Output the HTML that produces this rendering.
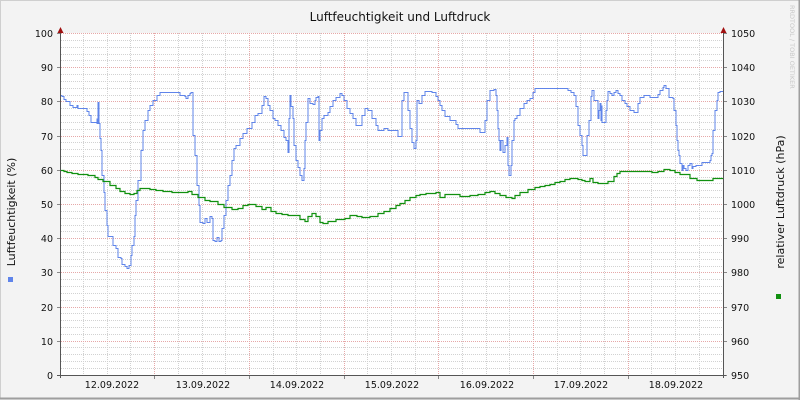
<!DOCTYPE html>
<html><head><meta charset="utf-8"><style>
html,body{margin:0;padding:0;background:#f3f3f3;}
svg{display:block;font-family:"DejaVu Sans","Liberation Sans",sans-serif;}
</style></head><body>
<svg width="800" height="400" viewBox="0 0 800 400" xmlns="http://www.w3.org/2000/svg">
<rect x="0" y="0" width="800" height="400" fill="#f3f3f3"/>
<path d="M0.5 0V399.5M0 0.5H800" stroke="#cfcfcf" fill="none"/>
<path d="M799.5 0V400M0 398.5H800" stroke="#9e9e9e" stroke-width="2" fill="none"/>
<rect x="61" y="33" width="662" height="342" fill="#ffffff"/>
<path stroke="#d2d2d2" stroke-dasharray="1,1" fill="none" d="M61 368.5H723M61 361.5H723M61 354.5H723M61 347.5H723M61 334.5H723M61 327.5H723M61 320.5H723M61 313.5H723M61 300.5H723M61 293.5H723M61 286.5H723M61 279.5H723M61 266.5H723M61 259.5H723M61 252.5H723M61 245.5H723M61 231.5H723M61 225.5H723M61 218.5H723M61 211.5H723M61 197.5H723M61 190.5H723M61 183.5H723M61 177.5H723M61 163.5H723M61 156.5H723M61 149.5H723M61 142.5H723M61 129.5H723M61 122.5H723M61 115.5H723M61 108.5H723M61 95.5H723M61 88.5H723M61 81.5H723M61 74.5H723M61 60.5H723M61 54.5H723M61 47.5H723M61 40.5H723"/>
<path stroke="#d2d2d2" stroke-dasharray="1,1" fill="none" d="M83.5 33V375M107.5 33V375M130.5 33V375M178.5 33V375M202.5 33V375M225.5 33V375M273.5 33V375M296.5 33V375M320.5 33V375M367.5 33V375M391.5 33V375M415.5 33V375M462.5 33V375M486.5 33V375M509.5 33V375M557.5 33V375M580.5 33V375M604.5 33V375M651.5 33V375M675.5 33V375M699.5 33V375"/>
<path stroke="#e6a8a8" stroke-dasharray="1,1" fill="none" d="M61 341.5H723M61 307.5H723M61 272.5H723M61 238.5H723M61 204.5H723M61 170.5H723M61 136.5H723M61 101.5H723M61 67.5H723M61 33.5H723M154.5 33V375M249.5 33V375M344.5 33V375M438.5 33V375M533.5 33V375M628.5 33V375"/>
<path stroke="#888" fill="none" d="M57 375.5H61M57 341.5H61M57 307.5H61M57 272.5H61M57 238.5H61M57 204.5H61M57 170.5H61M57 136.5H61M57 101.5H61M57 67.5H61M57 33.5H61M723 375.5H727M723 341.5H727M723 307.5H727M723 272.5H727M723 238.5H727M723 204.5H727M723 170.5H727M723 136.5H727M723 101.5H727M723 67.5H727M723 33.5H727M154.5 375V379M249.5 375V379M344.5 375V379M438.5 375V379M533.5 375V379M628.5 375V379"/>
<polyline class="step" fill="none" stroke="#5f84ea" stroke-width="1" points="61,95 62,96 64,99 66,101 70,105 73,107 76,107 77,105 78,108 85,108 87,111 89,115 91,122 93,122 96,122 97,118 97,123 98,102 99,123 100,138 101,150 102,175 104,192 105,210 107,225 108,236 111,236 113,245 116,248 118,257 121,258 122,264 125,266 127,268 129,265 131,255 132,245 134,236 135,215 136,200 138,180 141,150 143,130 145,120 148,110 150,105 153,100 157,95 160,92 178,92 180,95 185,96 186,98 188,95 190,93 191,92 193,135 195,155 197,185 199,205 200,222 203,223 205,218 207,222 210,216 212,218 213,240 215,241 217,237 219,241 221,240 222,228 224,215 226,200 228,185 230,175 232,160 234,148 236,145 240,138 243,133 247,128 252,122 255,115 258,113 262,105 264,96 266,98 268,105 270,110 273,118 275,120 278,125 281,130 284,137 286,140 288,152 289,118 290,95 291,106 293,118 294,145 296,160 298,167 300,175 302,180 304,168 305,140 306,122 308,98 310,103 313,104 315,100 316,97 318,96 319,140 320,130 322,118 324,115 328,112 330,106 333,100 336,97 340,93 342,95 344,100 347,108 350,113 353,118 356,125 358,125 362,115 365,108 368,110 372,118 376,125 378,130 382,130 384,128 388,130 397,130 398,136 400,136 402,100 404,92 406,92 408,110 410,128 412,142 414,148 416,140 417,100 419,103 422,95 425,91 428,91 432,92 436,96 438,100 440,105 442,110 445,116 450,120 456,124 458,128 478,128 480,132 484,132 485,120 487,100 490,90 494,89 496,95 497,110 498,128 499,140 500,150 501,140 503,152 505,145 507,137 508,165 509,175 510,175 511,165 512,140 514,120 515,118 517,115 520,108 524,103 527,100 530,98 533,92 535,88 567,88 568,90 571,92 574,95 576,106 578,125 580,135 582,145 583,155 585,155 587,135 589,120 591,96 592,90 594,100 596,100 598,118 599,110 600,103 601,120 602,105 602,122 604,122 606,110 607,100 608,91 610,93 612,95 614,92 616,90 618,93 620,95 622,100 625,103 627,106 630,110 632,110 634,112 638,103 640,97 644,95 648,95 650,97 656,97 658,94 660,90 663,87 664,85 666,88 669,97 673,98 674,110 676,125 677,140 678,150 679,155 680,163 682,170 683,165 684,168 686,170 688,165 690,163 692,168 693,166 696,165 700,165 702,162 708,162 710,160 711,155 712,153 713,130 715,110 717,100 718,92 720,91 723,91"/>
<polyline class="step" fill="none" stroke="#10900f" stroke-width="1.2" points="61,170 64,171 67,172 72,173 78,174 88,175 95,177 98,179 103,181 110,185 116,188 120,191 125,193 130,194 134,193 137,190 140,188 145,188 150,189 156,190 163,191 172,192 180,192 188,191 192,194 198,197 205,200 210,201 218,204 224,207 232,209 238,208 243,205 248,204 256,206 262,209 266,207 271,211 276,213 282,214 288,215 295,215 300,219 305,221 308,216 312,213 316,216 320,222 323,223 328,221 336,219 345,218 350,215 357,216 362,217 370,216 378,213 384,211 390,208 396,205 400,203 405,200 410,197 416,195 420,194 426,193 432,193 436,192 440,197 445,194 452,194 460,196 470,195 478,194 485,192 490,191 495,193 500,195 506,197 512,198 515,195 520,192 528,189 535,187 540,186 545,185 550,184 555,182 560,181 565,179 570,178 578,179 582,180 585,181 590,178 593,182 598,183 605,183 608,181 614,176 617,173 620,171 648,171 652,172 658,171 664,169 670,170 675,172 680,174 690,178 697,180 710,180 713,178 723,178"/>
<path stroke="#555" fill="none" d="M60.5 30V378M723.5 30V378M57 375.5H726"/>
<path fill="#a01010" d="M57.5 33L60.5 27L63.5 33ZM720.5 33L723.5 27L726.5 33Z"/>
<text x="400" y="21" font-size="12" text-anchor="middle" fill="#111">Luftfeuchtigkeit und Luftdruck</text>
<g font-size="9.5" fill="#111" text-anchor="end">
<text x="53" y="379">0</text><text x="53" y="345">10</text><text x="53" y="311">20</text><text x="53" y="276">30</text><text x="53" y="242">40</text><text x="53" y="208">50</text><text x="53" y="174">60</text><text x="53" y="140">70</text><text x="53" y="105">80</text><text x="53" y="71">90</text><text x="53" y="37">100</text>
</g>
<g font-size="9.5" fill="#111">
<text x="731" y="379">950</text><text x="731" y="345">960</text><text x="731" y="311">970</text><text x="731" y="276">980</text><text x="731" y="242">990</text><text x="731" y="208">1000</text><text x="731" y="174">1010</text><text x="731" y="140">1020</text><text x="731" y="105">1030</text><text x="731" y="71">1040</text><text x="731" y="37">1050</text>
</g>
<g font-size="9.5" fill="#111" text-anchor="middle">
<text x="112" y="388">12.09.2022</text><text x="203" y="388">13.09.2022</text><text x="297" y="388">14.09.2022</text><text x="392" y="388">15.09.2022</text><text x="487" y="388">16.09.2022</text><text x="581" y="388">17.09.2022</text><text x="676" y="388">18.09.2022</text>
</g>
<text transform="translate(15,212) rotate(-90)" font-size="11" text-anchor="middle" fill="#111">Luftfeuchtigkeit (%)</text>
<text transform="translate(784,202) rotate(-90)" font-size="11" text-anchor="middle" fill="#111">relativer Luftdruck (hPa)</text>
<text transform="translate(790,5) rotate(90)" font-size="6.5" fill="#c8c8c8">RRDTOOL / TOBI OETIKER</text>
<rect x="8" y="277" width="5" height="5" fill="#5f84ea"/>
<rect x="776" y="294" width="5" height="5" fill="#10900f"/>
</svg>
<script>
document.querySelectorAll('polyline.step').forEach(function(p){
  var pts=p.getAttribute('points').trim().split(/\s+/).map(function(s){return s.split(',').map(Number);});
  var out=[pts[0][0]+','+(pts[0][1]+0.5)];
  for(var i=1;i<pts.length;i++){
    out.push(pts[i][0]+','+(pts[i-1][1]+0.5));
    out.push(pts[i][0]+','+(pts[i][1]+0.5));
  }
  p.setAttribute('points',out.join(' '));
});
</script>
</body></html>
